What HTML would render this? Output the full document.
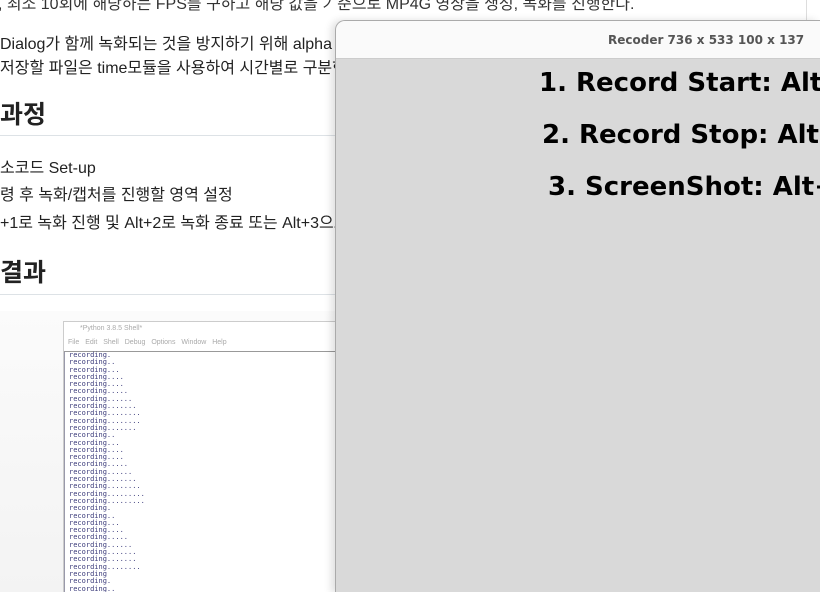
<!DOCTYPE html>
<html><head><meta charset="utf-8"><style>
html,body{margin:0;width:820px;height:592px;overflow:hidden}
body{background:#fff;position:relative;font-family:"Liberation Sans","Noto Sans CJK KR",sans-serif;color:#222}
.t{position:absolute;white-space:nowrap;font-size:16px}
.h{position:absolute;white-space:nowrap;font-size:25px;font-weight:bold;color:#222}
.hr{position:absolute;left:0;width:336px;height:1px;background:#dde2e6}
.win{position:absolute;left:335px;top:20px;width:484px;height:571px;background:#d9d9d9;border:1px solid #aaa;border-right:none;border-top-left-radius:10px;box-shadow:-4px 0 8px rgba(0,0,0,.12);overflow:hidden}
.tb{height:37px;background:#fafafa;border-bottom:1px solid #ccc;position:relative}
.tb span{position:absolute;left:272px;top:12px;font-family:"DejaVu Sans",sans-serif;font-weight:bold;font-size:12px;color:#555;white-space:nowrap}
.big{position:absolute;font-family:"DejaVu Sans",sans-serif;font-weight:bold;font-size:26px;color:#000;white-space:nowrap}
.rec{font-family:"DejaVu Sans Mono",monospace;font-size:7px;line-height:7.3px;color:#3a3a7a}
</style></head><body>
<div class="t" style="left:-2px;top:-10px;color:#333;width:335px;overflow:hidden">, 최소 10회에 해당하는 FPS를 구하고 해당 값을 기준으로 MP4G 영상을 생성, 녹화를 진행한다.</div>
<div class="t" style="left:336px;top:-10px;color:#333;width:470px;overflow:hidden;text-indent:-338px">, 최소 10회에 해당하는 FPS를 구하고 해당 값을 기준으로 MP4G 영상을 생성, 녹화를 진행한다.</div>
<div class="t" style="left:0;top:30px">Dialog가 함께 녹화되는 것을 방지하기 위해 alpha</div>
<div class="t" style="left:0;top:54px">저장할 파일은 time모듈을 사용하여 시간별로 구분한</div>
<div class="h" style="left:0;top:95px">과정</div>
<div class="hr" style="top:135px"></div>
<div class="t" style="left:0;top:154px">소코드 Set-up</div>
<div class="t" style="left:0;top:181px">령 후 녹화/캡처를 진행할 영역 설정</div>
<div class="t" style="left:0;top:209px">+1로 녹화 진행 및 Alt+2로 녹화 종료 또는 Alt+3으로</div>
<div class="h" style="left:0;top:253px">결과</div>
<div class="hr" style="top:294px"></div>
<div style="position:absolute;left:806px;top:0;width:1px;height:20px;background:#ddd"></div>
<div style="position:absolute;left:0;top:311px;width:336px;height:281px;background:linear-gradient(#fbfbfb,#f3f3f3)"></div>
<div style="position:absolute;left:63px;top:321px;width:273px;height:271px;background:#fff;border:1px solid #ccc;overflow:hidden">
 <div style="height:14px;font-size:7px;color:#aaa;padding:3px 0 0 16px">*Python 3.8.5 Shell*</div>
 <div style="height:12px;font-size:7px;color:#aaa;padding-left:4px;border-bottom:1px solid #999;word-spacing:4px">File Edit Shell Debug Options Window Help</div>
 <div class="rec" style="padding-left:4px;border-left:1px solid #99a">recording.<br>recording..<br>recording...<br>recording....<br>recording....<br>recording.....<br>recording......<br>recording.......<br>recording........<br>recording........<br>recording.......<br>recording..<br>recording...<br>recording....<br>recording....<br>recording.....<br>recording......<br>recording.......<br>recording........<br>recording.........<br>recording.........<br>recording.<br>recording..<br>recording...<br>recording....<br>recording.....<br>recording......<br>recording.......<br>recording.......<br>recording........<br>recording<br>recording.<br>recording..</div>
</div>
<div class="win"><div class="tb"><span>Recoder 736 x 533 100 x 137</span></div>
 <div class="big" style="left:203px;top:47px">1. Record Start: Alt+1</div>
 <div class="big" style="left:206px;top:99px">2. Record Stop: Alt+2</div>
 <div class="big" style="left:212px;top:151px">3. ScreenShot: Alt+3</div>
</div>
</body></html>
